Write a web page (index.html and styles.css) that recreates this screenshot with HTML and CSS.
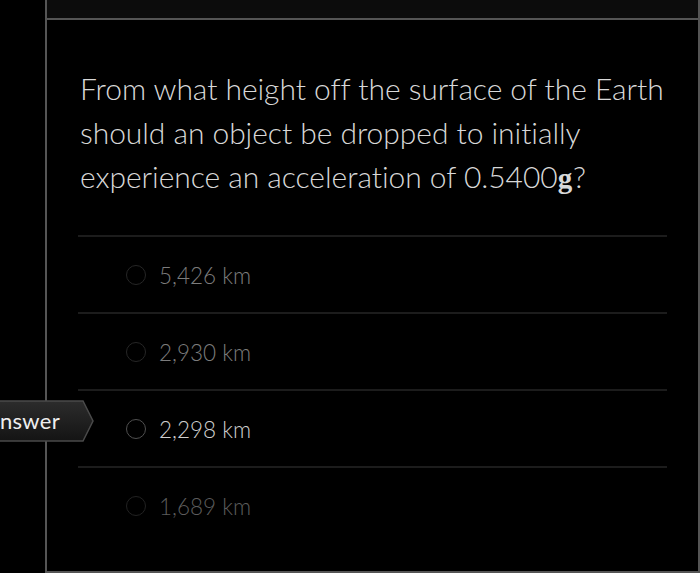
FILE: index.html
```html
<!DOCTYPE html>
<html>
<head>
<meta charset="utf-8">
<link rel="stylesheet" href="styles.css">
</head>
<body>
<div class="frame">
  <div class="header"></div>
  <div class="content">
    <p class="question">From what height off the surface of the Earth should an object be dropped to initially experience an acceleration of 0.5400<b class="g">g</b>?</p>
    <ul class="options">
      <li class="option dim"><span class="radio"></span><span class="label">5,426 km</span></li>
      <li class="option dim"><span class="radio"></span><span class="label">2,930 km</span></li>
      <li class="option active"><span class="radio"></span><span class="label">2,298 km</span></li>
      <li class="option dimmer"><span class="radio"></span><span class="label">1,689 km</span></li>
    </ul>
  </div>
</div>
<div class="tag">
  <svg class="tag-shape" width="96" height="42" viewBox="0 0 96 42">
    <defs>
      <linearGradient id="tg" x1="0" y1="0" x2="0" y2="1">
        <stop offset="0" stop-color="#2c2c2c"/>
        <stop offset="1" stop-color="#141414"/>
      </linearGradient>
    </defs>
    <polygon points="-2,1 83,1 93,21 83,41 -2,41" fill="url(#tg)" stroke="#4a4a4a" stroke-width="1.5"/>
  </svg>
  <span class="tag-text">Answer</span>
</div>
</body>
</html>
```

FILE: styles.css
```css
html, body {
  margin: 0;
  padding: 0;
  background: #000;
  height: 573px;
  overflow: hidden;
}
body {
  font-family: Lato, "Open Sans", sans-serif;
  position: relative;
}
.frame {
  margin-left: 45px;
  width: 651px;
  height: 571px;
  border-left: 2px solid #555;
  border-right: 2px solid #555;
  border-bottom: 2px solid #555;
  display: flex;
  flex-direction: column;
}
.header {
  height: 18px;
  background: #0c0c0c;
  border-bottom: 2px solid #555;
  flex: none;
}
.content {
  padding: 46px 31px 0 31px;
}
.question {
  margin: 0;
  padding-left: 2px;
  font-weight: 300;
  font-size: 30px;
  line-height: 44px;
  color: #d8d8d8;
  letter-spacing: -0.05px;
}
.g {
  font-weight: 700;
  font-family: "Liberation Serif", serif;
  font-size: 29px;
  margin-right: 1px;
}
.options {
  list-style: none;
  margin: 35px 0 0 0;
  padding: 0;
}
.option {
  border-top: 2px solid #1c1c1c;
  display: flex;
  align-items: center;
  padding-left: 48px;
  padding-top: 1px;
  box-sizing: border-box;
  height: 77px;
}
.radio {
  border: 1.5px solid #3a3a3a;
  border-radius: 50%;
  box-sizing: border-box;
  width: 20px;
  height: 20px;
  flex: none;
}
.label {
  margin-left: 13px;
  font-size: 22.5px;
  font-weight: 300;
  color: #7c7c7c;
}
.dim .radio { border-color: #262626; }
.dimmer .radio { border-color: #222; }
.dimmer .label { color: #5c5c5c; }
.active .radio { border-color: #505050; }
.active .label { color: #cfcfcf; }
.tag {
  position: absolute;
  left: 0;
  top: 400px;
  width: 96px;
  height: 42px;
  overflow: hidden;
}
.tag-shape {
  position: absolute;
  left: 0;
  top: 0;
}
.tag-text {
  position: absolute;
  right: 36px;
  top: 7px;
  font-size: 22px;
  color: #eeeeee;
  letter-spacing: 0.3px;
}
```
